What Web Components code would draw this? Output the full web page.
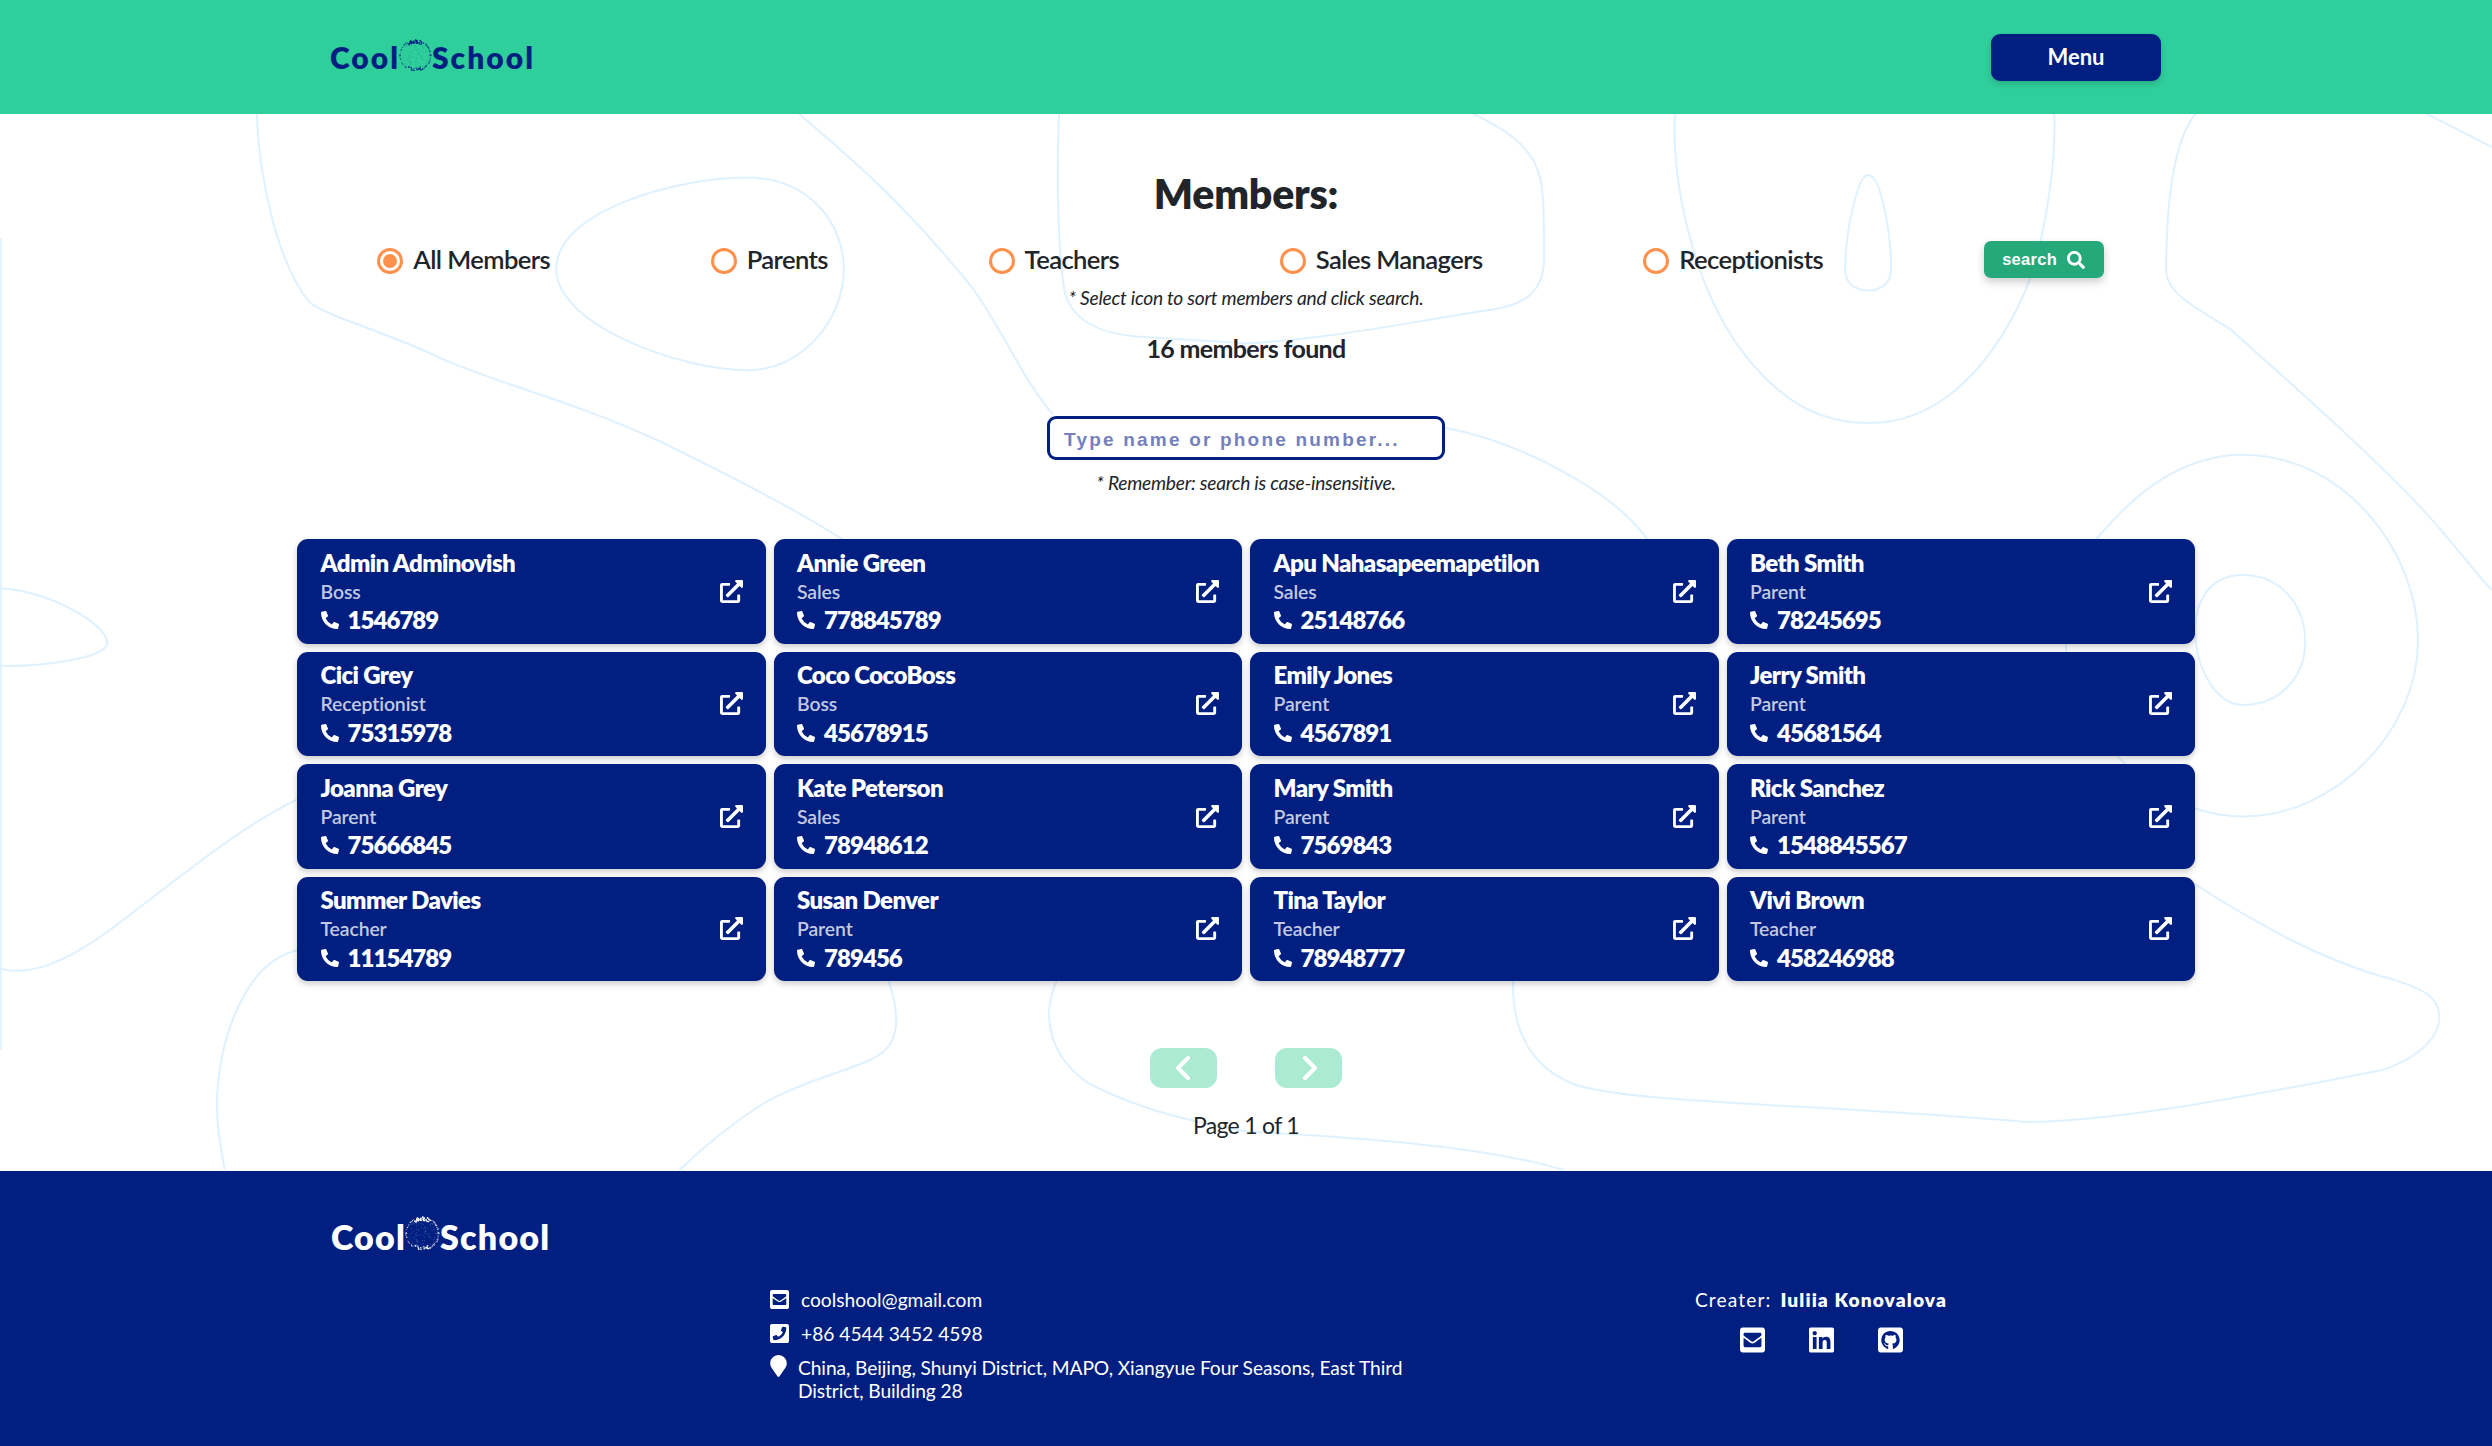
<!DOCTYPE html>
<html lang="en">
<head>
<meta charset="utf-8">
<title>Cool School - Members</title>
<style>
  html, body { margin: 0; padding: 0; }
  body { font-family: Lato, "Liberation Sans", sans-serif; color: #212529; background: #fff; }
</style>
</head>
<body>
<site-header></site-header>
<members-page>
  <radio-option slot="filters" checked>All Members</radio-option>
  <radio-option slot="filters">Parents</radio-option>
  <radio-option slot="filters">Teachers</radio-option>
  <radio-option slot="filters">Sales Managers</radio-option>
  <radio-option slot="filters">Receptionists</radio-option>
  <search-button slot="filters"></search-button>

  <member-card name="Admin Adminovish" role="Boss" phone="1546789"></member-card>
  <member-card name="Annie Green" role="Sales" phone="778845789"></member-card>
  <member-card name="Apu Nahasapeemapetilon" role="Sales" phone="25148766"></member-card>
  <member-card name="Beth Smith" role="Parent" phone="78245695"></member-card>
  <member-card name="Cici Grey" role="Receptionist" phone="75315978"></member-card>
  <member-card name="Coco CocoBoss" role="Boss" phone="45678915"></member-card>
  <member-card name="Emily Jones" role="Parent" phone="4567891"></member-card>
  <member-card name="Jerry Smith" role="Parent" phone="45681564"></member-card>
  <member-card name="Joanna Grey" role="Parent" phone="75666845"></member-card>
  <member-card name="Kate Peterson" role="Sales" phone="78948612"></member-card>
  <member-card name="Mary Smith" role="Parent" phone="7569843"></member-card>
  <member-card name="Rick Sanchez" role="Parent" phone="1548845567"></member-card>
  <member-card name="Summer Davies" role="Teacher" phone="11154789"></member-card>
  <member-card name="Susan Denver" role="Parent" phone="789456"></member-card>
  <member-card name="Tina Taylor" role="Teacher" phone="78948777"></member-card>
  <member-card name="Vivi Brown" role="Teacher" phone="458246988"></member-card>
</members-page>
<site-footer></site-footer>

<script>
const NAVY = '#001f80';

const ICONS = {
  phone: ['0 0 512 512', 'M497.39 361.8l-112-48a24 24 0 0 0-28 6.9l-49.6 60.6A370.66 370.66 0 0 1 130.6 204.11l60.6-49.6a23.94 23.94 0 0 0 6.9-28l-48-112A24.16 24.16 0 0 0 122.6.61l-104 24A24 24 0 0 0 0 48c0 256.5 207.9 464 464 464a24 24 0 0 0 23.4-18.6l24-104a24.29 24.29 0 0 0-14.01-27.6z'],
  external: ['0 0 512 512', 'M432,320H400a16,16,0,0,0-16,16V448H64V128H208a16,16,0,0,0,16-16V80a16,16,0,0,0-16-16H48A48,48,0,0,0,0,112V464a48,48,0,0,0,48,48H400a48,48,0,0,0,48-48V336A16,16,0,0,0,432,320ZM488,0h-128c-21.37,0-32.05,25.91-17,41l35.73,35.73L135,320.37a24,24,0,0,0,0,34L157.67,377a24,24,0,0,0,34,0L435.28,133.32,471,169c15,15,41,4.5,41-17V24A24,24,0,0,0,488,0Z'],
  search: ['0 0 512 512', 'M505 442.7L405.3 343c-4.5-4.5-10.6-7-17-7H372c27.6-35.3 44-79.7 44-128C416 93.1 322.9 0 208 0S0 93.1 0 208s93.1 208 208 208c48.3 0 92.7-16.4 128-44v16.3c0 6.4 2.5 12.5 7 17l99.7 99.7c9.4 9.4 24.6 9.4 33.9 0l28.3-28.3c9.4-9.4 9.4-24.6.1-34zM208 336c-70.7 0-128-57.2-128-128 0-70.7 57.2-128 128-128 70.7 0 128 57.2 128 128 0 70.7-57.2 128-128 128z'],
  mail: ['0 32 448 448', 'M400 32H48C21.49 32 0 53.49 0 80v352c0 26.51 21.49 48 48 48h352c26.51 0 48-21.49 48-48V80c0-26.51-21.49-48-48-48zM178.117 262.104C87.429 196.287 88.353 196.121 64 177.167V152c0-13.255 10.745-24 24-24h272c13.255 0 24 10.745 24 24v25.167c-24.371 18.969-23.434 19.124-114.117 84.938-10.5 7.655-31.392 26.12-45.883 25.894-14.503.218-35.367-18.227-45.883-25.895zM384 217.775V360c0 13.255-10.745 24-24 24H88c-13.255 0-24-10.745-24-24V217.775c13.958 10.794 33.329 25.236 95.303 70.214 14.162 10.341 37.975 32.145 64.694 32.01 26.887.134 51.037-22.041 64.72-32.025 61.958-44.965 81.325-59.406 95.283-70.199z'],
  phoneSquare: ['0 32 448 448', 'M400 32H48C21.49 32 0 53.49 0 80v352c0 26.51 21.49 48 48 48h352c26.51 0 48-21.49 48-48V80c0-26.51-21.49-48-48-48zM94 416c-7.033 0-13.057-4.873-14.616-11.627l-14.998-65a15 15 0 0 1 8.707-17.16l69.998-29.999a15 15 0 0 1 17.518 4.289l30.997 37.885c48.944-22.963 88.297-62.858 110.781-110.78l-37.886-30.997a15.001 15.001 0 0 1-4.289-17.518l30-69.998a15 15 0 0 1 17.16-8.707l65 14.998A14.997 14.997 0 0 1 384 126c0 160.292-129.945 290-290 290z'],
  marker: ['0 0 384 512', 'M172.268 501.67C26.97 291.031 0 268.413 0 192 0 85.961 85.961 0 192 0s192 85.961 192 192c0 76.413-26.97 99.031-172.268 309.67-9.535 13.774-29.93 13.773-39.464 0z'],
  linkedin: ['0 32 448 448', 'M416 32H31.9C14.3 32 0 46.5 0 64.3v383.4C0 465.5 14.3 480 31.9 480H416c17.6 0 32-14.5 32-32.3V64.3c0-17.8-14.4-32.3-32-32.3zM135.4 416H69V202.2h66.5V416zm-33.2-243c-21.3 0-38.5-17.3-38.5-38.5S80.9 96 102.2 96c21.2 0 38.5 17.3 38.5 38.5 0 21.3-17.2 38.5-38.5 38.5zm282.1 243h-66.4V312c0-24.8-.5-56.7-34.5-56.7-34.6 0-39.9 27-39.9 54.9V416h-66.4V202.2h63.7v29.2h.9c8.9-16.8 30.6-34.5 62.9-34.5 67.2 0 79.7 44.3 79.7 101.9V416z'],
  github: ['0 32 448 448', 'M400 32H48C21.5 32 0 53.5 0 80v352c0 26.5 21.5 48 48 48h352c26.5 0 48-21.5 48-48V80c0-26.5-21.5-48-48-48zM277.3 415.7c-8.4 1.5-11.5-3.7-11.5-8 0-5.4.2-33 .2-55.3 0-15.6-5.2-25.5-11.3-30.7 37-4.1 76-9.2 76-73.1 0-18.2-6.5-27.3-17.1-39 1.7-4.3 7.4-22-1.7-45-13.9-4.3-45.7 17.9-45.7 17.9-13.2-3.7-27.5-5.6-41.6-5.6-14.1 0-28.4 1.9-41.6 5.6 0 0-31.8-22.2-45.7-17.9-9.1 22.9-3.5 40.6-1.7 45-10.6 11.7-15.6 20.8-15.6 39 0 63.6 37.3 69 74.3 73.1-4.8 4.3-9.1 11.7-10.6 22.3-9.5 4.3-33.8 11.7-48.3-13.9-9.1-15.8-25.5-17.1-25.5-17.1-16.2-.2-1.1 10.2-1.1 10.2 10.8 5 18.4 24.2 18.4 24.2 9.7 29.7 56.1 19.7 56.1 19.7 0 13.9.2 36.5.2 40.6 0 4.3-3 9.5-11.5 8-66-22.1-112.2-84.9-112.2-158.3 0-91.8 70.2-161.5 162-161.5S388 165.6 388 257.4c.1 73.4-44.7 136.3-110.7 158.3z']
};

function icon(name, w, h) {
  const [box, d] = ICONS[name];
  return `<svg width="${w}" height="${h}" viewBox="${box}" fill="currentColor" style="display:block;flex:none"><path fill-rule="evenodd" d="${d}"/></svg>`;
}

// speckled globe of the logo: a dotted rim, heavier clumps at the poles, faint dots inside
function globeDots(color) {
  let seed = 7;
  const rnd = () => (seed = (seed * 16807) % 2147483647) / 2147483647;
  let out = '';
  for (let i = 0; i < 230; i++) {
    const a = rnd() * Math.PI * 2;
    const pole = Math.abs(Math.sin(a));
    const inner = i % 3 === 0;
    const r = inner ? Math.sqrt(rnd()) * 14 : 15.8 - rnd() * (pole > .85 ? 3.5 : 1.2);
    const x = 17 + Math.cos(a) * r;
    const y = 17 + Math.sin(a) * r;
    const o = inner ? .28 : pole > .85 ? 1 : .7;
    const s = !inner && pole > .85 ? 1.2 : .8;
    out += `<rect x="${x.toFixed(1)}" y="${y.toFixed(1)}" width="${s}" height="${s}" fill="${color}" opacity="${o}"/>`;
  }
  return out;
}

class CoolLogo extends HTMLElement {
  connectedCallback() {
    const size = this.getAttribute('size') || 30;
    const spacing = this.getAttribute('spacing') || 3;
    const globe = +this.getAttribute('globe') || 34;
    const color = this.getAttribute('color') || NAVY;
    this.attachShadow({ mode: 'open' }).innerHTML = `
      <style>
        :host { display: inline-flex; align-items: center; color: ${color}; font: 800 ${size}px/1 Lato, sans-serif; letter-spacing: ${spacing}px; }
        svg { display: block; flex: none; margin: ${this.getAttribute('lift') || -4}px 0 0 -2px; }
      </style>
      <span>Cool</span>
      <svg width="${globe}" height="${globe}" viewBox="0 0 34 34">${globeDots(color)}</svg>
      <span>School</span>`;
  }
}
customElements.define('cool-logo', CoolLogo);

class SiteHeader extends HTMLElement {
  constructor() {
    super();
    this.attachShadow({ mode: 'open' }).innerHTML = `
      <style>
        :host { display: flex; align-items: center; justify-content: space-between; height: 114px; box-sizing: border-box; padding: 0 331px 0 330px; background: #2fcf9b; }
        button { width: 170px; height: 47px; padding: 0 0 2px; border: 0; border-radius: 9px; background: ${NAVY}; color: #fff; font: 700 22px Lato, sans-serif; box-shadow: 0 3px 6px rgba(0,0,0,.16); }
      </style>
      <cool-logo size="30" spacing="2" globe="34"></cool-logo>
      <button>Menu</button>`;
  }
}
customElements.define('site-header', SiteHeader);

const radioTemplate = document.createElement('template');
radioTemplate.innerHTML = `
  <style>
    :host { display: inline-flex; align-items: center; gap: 10px; font: 600 25.6px/35px Lato, sans-serif; letter-spacing: -.6px; color: #212529; }
    .dot { width: 26px; height: 26px; margin-top: 2px; box-sizing: border-box; border: 3px solid #ff914d; border-radius: 50%; display: grid; place-items: center; background: #fff; }
    :host([checked]) .dot::after { content: ""; width: 14px; height: 14px; border-radius: 50%; background: #ff914d; }
  </style>
  <span class="dot"></span><slot></slot>`;
class RadioOption extends HTMLElement {
  constructor() {
    super();
    this.attachShadow({ mode: 'open' }).appendChild(radioTemplate.content.cloneNode(true));
  }
}
customElements.define('radio-option', RadioOption);

class SearchButton extends HTMLElement {
  constructor() {
    super();
    this.attachShadow({ mode: 'open' }).innerHTML = `
      <style>
        :host { display: inline-flex; align-items: center; justify-content: center; gap: 10px; width: 120px; height: 37px; border-radius: 7px; background: #26a97a; color: #fff; font: 700 16.5px "Liberation Sans", sans-serif; letter-spacing: .3px; box-shadow: 0 4px 8px rgba(0,0,0,.2); }
      </style>
      search ${icon('search', 18, 18)}`;
  }
}
customElements.define('search-button', SearchButton);

class MemberCard extends HTMLElement {
  connectedCallback() {
    this.attachShadow({ mode: 'open' }).innerHTML = `
      <style>
        :host { display: flex; align-items: center; justify-content: space-between; box-sizing: border-box; padding: 9.5px 23px 0 23.5px; border-radius: 11px; background: ${NAVY}; color: #fff; box-shadow: 0 3px 6px rgba(0,0,0,.2); }
        .info { align-self: flex-start; }
        .name { font: 800 24px/28px Lato, sans-serif; letter-spacing: -.6px; }
        .role { font: 600 19.4px/30.5px Lato, sans-serif; color: #c3c9e3; letter-spacing: -.1px; }
        .phone { display: flex; align-items: center; gap: 9px; padding-top: 1px; font: 800 24px/24px Lato, sans-serif; letter-spacing: -.95px; }
        .ext { margin-top: -10px; }
      </style>
      <div class="info">
        <div class="name">${this.getAttribute('name')}</div>
        <div class="role">${this.getAttribute('role')}</div>
        <div class="phone">${icon('phone', 18, 18)}<span>${this.getAttribute('phone')}</span></div>
      </div>
      <div class="ext">${icon('external', 23, 23)}</div>`;
  }
}
customElements.define('member-card', MemberCard);

class PageNav extends HTMLElement {
  constructor() {
    super();
    this.attachShadow({ mode: 'open' }).innerHTML = `
      <style>
        :host { display: flex; flex-direction: column; align-items: center; }
        .btns { display: flex; gap: 58px; }
        .btn { width: 67px; height: 40px; border-radius: 12px; background: #abebd3; display: grid; place-items: center; }
        p { margin: 22.5px 0 0; font: 400 23px/28px Lato, sans-serif; letter-spacing: -.7px; color: #212529; }
      </style>
      <div class="btns">
        <div class="btn"><svg width="18" height="24" viewBox="0 0 18 24" fill="none" stroke="#fff" stroke-width="4" stroke-linecap="round" stroke-linejoin="round"><path d="M13 2 3 12l10 10"/></svg></div>
        <div class="btn"><svg width="18" height="24" viewBox="0 0 18 24" fill="none" stroke="#fff" stroke-width="4" stroke-linecap="round" stroke-linejoin="round"><path d="M5 2l10 10L5 22"/></svg></div>
      </div>
      <p>Page 1 of 1</p>`;
  }
}
customElements.define('page-nav', PageNav);

class MembersPage extends HTMLElement {
  constructor() {
    super();
    this.attachShadow({ mode: 'open' }).innerHTML = `
      <style>
        :host { display: block; position: relative; height: 1057px; overflow: hidden; background: #fff; }
        .lines { position: absolute; inset: 0; width: 100%; height: 100%; }
        .lines path { fill: none; stroke: #dff1ff; stroke-width: 2; vector-effect: non-scaling-stroke; }
        .wrap { position: relative; width: 1898px; margin: 0 auto; padding-top: 56px; display: flex; flex-direction: column; align-items: center; }
        h1 { margin: 0; font: 800 41px/48px Lato, sans-serif; letter-spacing: -.2px; color: #212529; }
        .filters { align-self: stretch; display: flex; justify-content: space-around; align-items: center; margin: 23px 11px 0 0; }
        .hint { margin: 8px 0 0; font: italic 400 19.2px/24px Lato, sans-serif; letter-spacing: -.24px; color: #212529; }
        .found { margin: 23px 0 0; font: 700 25px/30px Lato, sans-serif; letter-spacing: -.65px; color: #212529; }
        input { display: block; width: 398px; height: 44px; box-sizing: border-box; margin-top: 53px; padding: 3px 14px 0; border: 3px solid ${NAVY}; border-radius: 9px; background: #fff; outline: 0; font: 700 19px "Liberation Sans", sans-serif; letter-spacing: 2.2px; }
        input::placeholder { color: #7580bd; opacity: 1; }
        .note { margin-top: 11px; }
        .grid { align-self: stretch; display: grid; grid-template-columns: repeat(4, 1fr); grid-auto-rows: 104.5px; gap: 8px; margin-top: 44px; }
        page-nav { margin-top: 67px; }
      </style>
      <svg class="lines" viewBox="0 114 2492 1057" preserveAspectRatio="none">
        <g transform="translate(0 110) scale(.7946 .676)">
          <path d="M323 0C325 100 350 230 390 285C420 310 470 320 560 370C640 410 720 430 830 490C900 530 1000 590 1060 635"/>
          <path d="M1000 0C1060 60 1130 130 1200 230C1250 290 1280 390 1325 450"/>
          <path d="M940 100C1020 100 1062 170 1062 235C1062 310 1010 385 940 385C860 385 700 320 700 235C700 150 850 100 940 100Z"/>
          <path d="M0 708C60 710 135 760 135 788C135 810 60 823 0 823"/>
          <path d="M1 190V1390"/>
          <path d="M0 1270C30 1280 70 1270 130 1220C200 1160 300 1060 374 1020"/>
          <path d="M374 1243C310 1260 275 1370 273 1470C273 1510 278 1540 283 1568"/>
          <path d="M1118 1288C1130 1330 1135 1370 1110 1395C1080 1420 1020 1430 960 1470C920 1500 880 1540 855 1568"/>
          <path d="M1330 1288C1310 1340 1320 1400 1370 1440C1420 1470 1470 1490 1568 1511"/>
          <path d="M1333 0C1330 80 1330 200 1340 270C1350 310 1380 330 1430 335L1568 345"/>
        </g>
        <g transform="translate(1246 110) scale(.7946 .676)">
          <path d="M0 1511C130 1520 290 1530 400 1568"/>
          <path d="M0 345C100 340 200 315 300 297C350 290 375 270 375 220C375 170 375 120 370 100C360 50 320 25 285 5"/>
          <path d="M540 0C535 100 560 250 620 350C670 430 720 463 785 463C860 463 930 400 980 270C1010 180 1020 60 1017 0"/>
          <path d="M783 96C800 96 812 190 812 235C812 255 800 267 783 267C765 267 754 255 754 235C754 190 768 96 783 96Z"/>
          <path d="M1195 5C1165 50 1158 150 1158 240C1160 270 1190 290 1240 325C1290 380 1400 490 1480 590C1520 640 1550 690 1568 710"/>
          <path d="M1485 5L1568 55"/>
          <path d="M251 470C340 490 460 560 505 635"/>
          <path d="M1070 635C1130 550 1190 510 1255 510C1380 510 1475 650 1475 785C1475 920 1370 1045 1255 1045C1100 1045 960 800 1070 635Z"/>
          <path d="M1255 688C1300 688 1333 730 1333 787C1333 840 1300 880 1255 880C1190 880 1160 688 1255 688Z"/>
          <path d="M336 1288C335 1350 350 1410 410 1440C480 1470 720 1470 980 1497C1100 1497 1300 1450 1430 1420C1480 1400 1502 1370 1502 1340C1500 1310 1480 1300 1440 1285C1360 1260 1280 1210 1194 1145"/>
        </g>
      </svg>
      <div class="wrap">
        <h1>Members:</h1>
        <div class="filters"><slot name="filters"></slot></div>
        <p class="hint">* Select icon to sort members and click search.</p>
        <p class="found">16 members found</p>
        <input type="text" placeholder="Type name or phone number...">
        <p class="hint note">* Remember: search is case-insensitive.</p>
        <div class="grid"><slot></slot></div>
        <page-nav></page-nav>
      </div>`;
  }
}
customElements.define('members-page', MembersPage);

class SiteFooter extends HTMLElement {
  constructor() {
    super();
    this.attachShadow({ mode: 'open' }).innerHTML = `
      <style>
        :host { display: block; height: 275px; box-sizing: border-box; padding: 49px 0 0 331px; background: ${NAVY}; color: #fff; font: 400 19.2px/23px Lato, sans-serif; }
        .cols { display: grid; grid-template-columns: 439px 680px 742px; margin-top: 28px; }
        .contact { grid-column: 2; display: flex; flex-direction: column; }
        .row { display: flex; align-items: center; gap: 12px; height: 34px; }
        .row.addr { align-items: flex-start; gap: 12px; height: auto; margin-top: 5px; letter-spacing: -.08px; }
        .addr svg { margin-top: 0; }
        .addr span { width: 620px; margin-left: -1px; padding-top: 1px; }
        .creator { display: flex; flex-direction: column; align-items: center; padding-top: 6px; }
        .creator p { margin: 0; letter-spacing: 1.1px; }
        .creator b { font-weight: 800; margin-left: 3px; }
        .social { display: flex; gap: 44px; margin-top: 16px; }
      </style>
      <cool-logo color="#fff" size="34" spacing="1.2" globe="36" lift="-8"></cool-logo>
      <div class="cols">
        <div class="contact">
          <div class="row">${icon('mail', 19, 19)}<span>coolshool@gmail.com</span></div>
          <div class="row">${icon('phoneSquare', 19, 19)}<span>+86 4544 3452 4598</span></div>
          <div class="row addr">${icon('marker', 17, 22)}<span>China, Beijing, Shunyi District, MAPO, Xiangyue Four Seasons, East Third District, Building 28</span></div>
        </div>
        <div class="creator">
          <p>Creater: <b>Iuliia Konovalova</b></p>
          <div class="social">${icon('mail', 25, 26)}${icon('linkedin', 25, 26)}${icon('github', 25, 26)}</div>
        </div>
      </div>`;
  }
}
customElements.define('site-footer', SiteFooter);
</script>
</body>
</html>
